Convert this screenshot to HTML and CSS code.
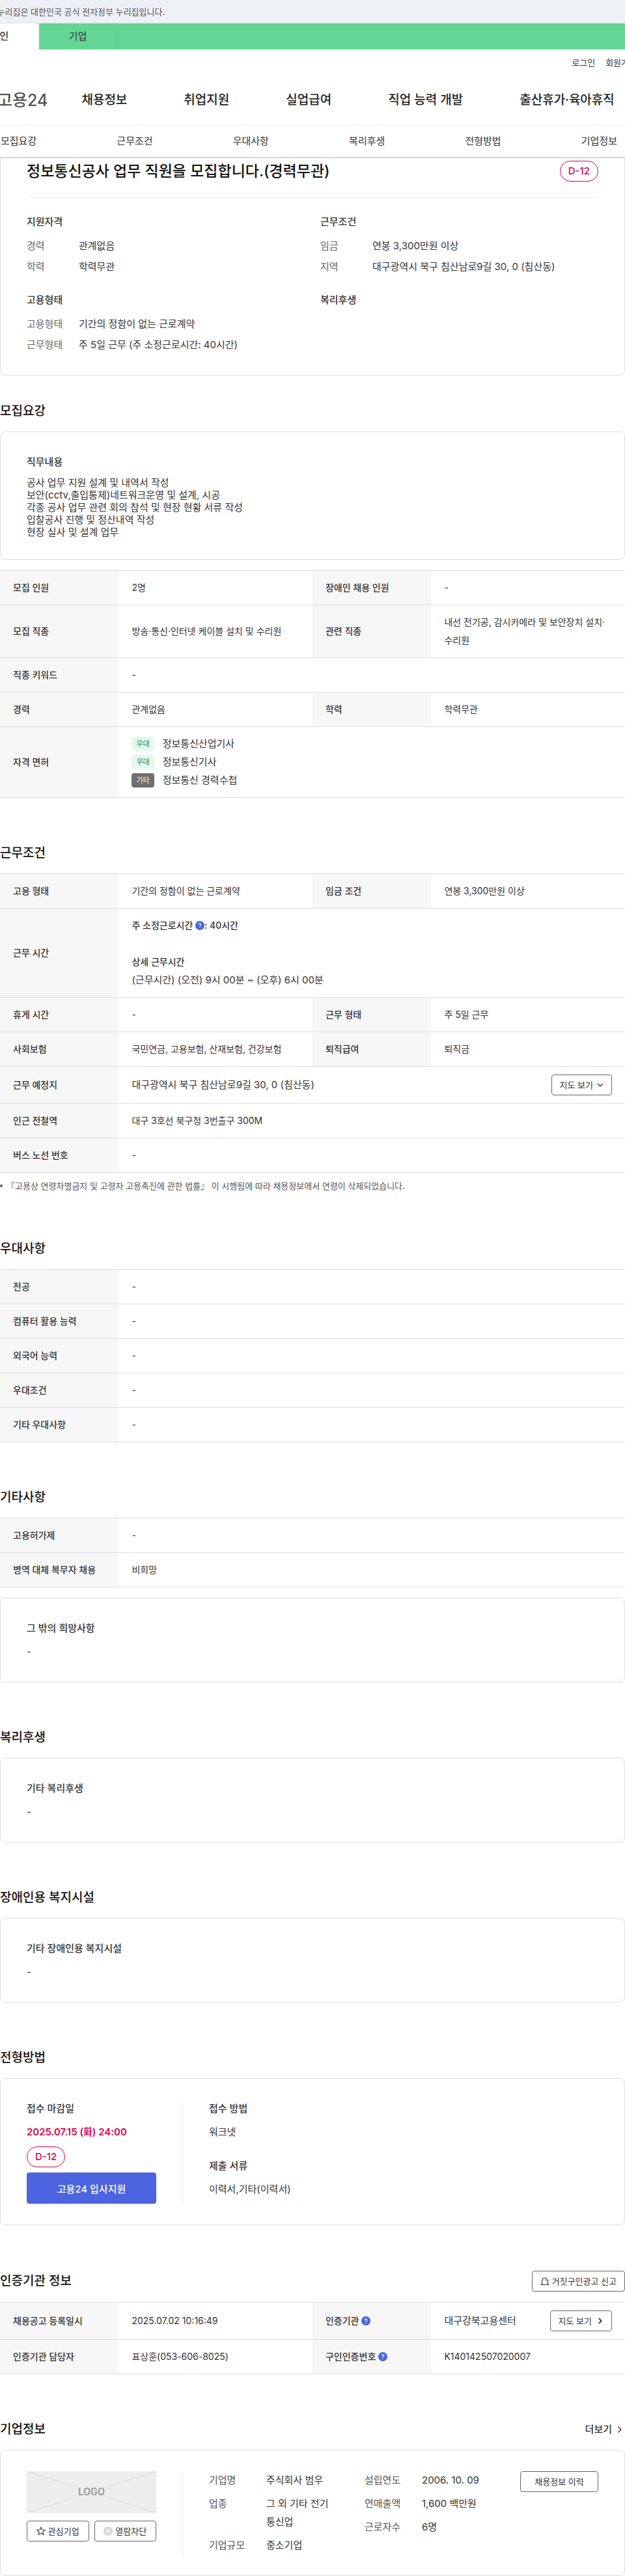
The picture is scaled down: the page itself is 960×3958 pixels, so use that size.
FILE: index.html
```html
<!DOCTYPE html>
<html lang="ko">
<head>
<meta charset="utf-8">
<meta name="viewport" content="width=device-width, initial-scale=1">
<title>고용24 채용정보 상세</title>
<link rel="stylesheet" href="styles.css">
</head>
<body>
<div class="gov-banner"><p class="gov-text">이 누리집은 대한민국 공식 전자정부 누리집입니다.</p></div>
<header class="site-header">
  <div class="member-bar">
    <a class="member-tab is-active" href="#">개인</a>
    <a class="member-tab" href="#">기업</a>
  </div>
  <div class="util">
    <a href="#">로그인</a>
    <a href="#">회원가입</a>
  </div>
  <nav class="main-nav" aria-label="주 메뉴">
    <a class="brand" href="#">고용24</a>
    <div class="main-links">
      <a href="#">채용정보</a>
      <a href="#">취업지원</a>
      <a href="#">실업급여</a>
      <a href="#">직업 능력 개발</a>
      <a href="#">출산휴가·육아휴직</a>
    </div>
  </nav>
  <nav class="page-tabs" aria-label="상세 메뉴">
    <a href="#recruit">모집요강</a>
    <a href="#work">근무조건</a>
    <a href="#prefer">우대사항</a>
    <a href="#welfare">복리후생</a>
    <a href="#method">전형방법</a>
    <a href="#company">기업정보</a>
  </nav>
</header>
<main>
  <section class="card summary">
    <div class="summary-head">
      <h1>정보통신공사 업무 직원을 모집합니다.(경력무관)</h1>
      <span class="dday">D-12</span>
    </div>
    <div class="summary-grid">
      <div>
        <h3>지원자격</h3>
        <dl class="pairs">
          <dt>경력</dt><dd>관계없음</dd>
          <dt>학력</dt><dd>학력무관</dd>
        </dl>
      </div>
      <div>
        <h3>근무조건</h3>
        <dl class="pairs">
          <dt>임금</dt><dd>연봉 3,300만원 이상</dd>
          <dt>지역</dt><dd>대구광역시 북구 침산남로9길 30, 0 (침산동)</dd>
        </dl>
      </div>
      <div>
        <h3>고용형태</h3>
        <dl class="pairs">
          <dt>고용형태</dt><dd>기간의 정함이 없는 근로계약</dd>
          <dt>근무형태</dt><dd>주 5일 근무 (주 소정근로시간: 40시간)</dd>
        </dl>
      </div>
      <div>
        <h3>복리후생</h3>
      </div>
    </div>
  </section>

  <section class="block block-first" id="recruit">
    <div class="block-head"><h2>모집요강</h2></div>
    <div class="card">
      <h3>직무내용</h3>
      <p class="duties">공사 업무 지원 설계 및 내역서 작성<br>보안(cctv,출입통제)네트워크운영 및 설계, 시공<br>각종 공사 업무 관련 회의 참석 및 현장 현황 서류 작성<br>입찰공사 진행 및 정산내역 작성<br>현장 실사 및 설계 업무</p>
    </div>
    <table class="info after-card">
      <colgroup><col class="c-th"><col class="c-td"><col class="c-th"><col class="c-td"></colgroup>
      <tr><th scope="row">모집 인원</th><td>2명</td><th scope="row">장애인 채용 인원</th><td>-</td></tr>
      <tr><th scope="row">모집 직종</th><td>방송·통신·인터넷 케이블 설치 및 수리원</td><th scope="row">관련 직종</th><td>내선 전기공, 감시카메라 및 보안장치 설치·수리원</td></tr>
      <tr><th scope="row">직종 키워드</th><td colspan="3">-</td></tr>
      <tr><th scope="row">경력</th><td>관계없음</td><th scope="row">학력</th><td>학력무관</td></tr>
      <tr><th scope="row">자격 면허</th><td colspan="3">
        <ul class="licenses">
          <li><span class="badge">우대</span>정보통신산업기사</li>
          <li><span class="badge">우대</span>정보통신기사</li>
          <li><span class="badge badge-dark">기타</span>정보통신 경력수첩</li>
        </ul>
      </td></tr>
    </table>
  </section>

  <section class="block" id="work">
    <div class="block-head"><h2>근무조건</h2></div>
    <table class="info">
      <colgroup><col class="c-th"><col class="c-td"><col class="c-th"><col class="c-td"></colgroup>
      <tr><th scope="row">고용 형태</th><td>기간의 정함이 없는 근로계약</td><th scope="row">임금 조건</th><td>연봉 3,300만원 이상</td></tr>
      <tr><th scope="row">근무 시간</th><td colspan="3">
        <p class="strong">주 소정근로시간 <button class="help" type="button" aria-label="도움말"><svg viewBox="0 0 14 14" width="14" height="14"><circle cx="7" cy="7" r="7" fill="#4c64e0"/><path d="M5.3 5.6a1.7 1.7 0 1 1 2.5 1.5c-.6.3-.8.6-.8 1.100M7 9.600v1.200" fill="none" stroke="#fff" stroke-width="1.200"/></svg></button>: 40시간</p>
        <p class="strong spaced">상세 근무시간</p>
        <p class="large">(근무시간) (오전) 9시 00분 ~ (오후) 6시 00분</p>
      </td></tr>
      <tr><th scope="row">휴게 시간</th><td>-</td><th scope="row">근무 형태</th><td>주 5일 근무</td></tr>
      <tr><th scope="row">사회보험</th><td>국민연금, 고용보험, 산재보험, 건강보험</td><th scope="row">퇴직급여</th><td>퇴직금</td></tr>
      <tr><th scope="row">근무 예정지</th><td colspan="3">
        <div class="with-button">
          <span class="large">대구광역시 북구 침산남로9길 30, 0 (침산동)</span>
          <button class="btn btn-map" type="button">지도 보기<svg viewBox="0 0 10 10" width="10" height="10"><path d="M1 3l4 4 4-4" fill="none" stroke="#333" stroke-width="1.300"/></svg></button>
        </div>
      </td></tr>
      <tr><th scope="row">인근 전철역</th><td colspan="3">대구 3호선 북구청 3번출구 300M</td></tr>
      <tr><th scope="row">버스 노선 번호</th><td colspan="3">-</td></tr>
    </table>
    <ul class="note"><li>『고용상 연령차별금지 및 고령자 고용촉진에 관한 법률』 이 시행됨에 따라 채용정보에서 연령이 삭제되었습니다.</li></ul>
  </section>

  <section class="block" id="prefer">
    <div class="block-head"><h2>우대사항</h2></div>
    <table class="info">
      <colgroup><col class="c-th"><col></colgroup>
      <tr><th scope="row">전공</th><td>-</td></tr>
      <tr><th scope="row">컴퓨터 활용 능력</th><td>-</td></tr>
      <tr><th scope="row">외국어 능력</th><td>-</td></tr>
      <tr><th scope="row">우대조건</th><td>-</td></tr>
      <tr><th scope="row">기타 우대사항</th><td>-</td></tr>
    </table>
  </section>

  <section class="block">
    <div class="block-head"><h2>기타사항</h2></div>
    <table class="info">
      <colgroup><col class="c-th"><col></colgroup>
      <tr><th scope="row">고용허가제</th><td>-</td></tr>
      <tr><th scope="row">병역 대체 복무자 채용</th><td>비희망</td></tr>
    </table>
    <div class="card after-table">
      <h3>그 밖의 희망사항</h3>
      <p>-</p>
    </div>
  </section>

  <section class="block" id="welfare">
    <div class="block-head"><h2>복리후생</h2></div>
    <div class="card">
      <h3>기타 복리후생</h3>
      <p>-</p>
    </div>
  </section>

  <section class="block">
    <div class="block-head"><h2>장애인용 복지시설</h2></div>
    <div class="card">
      <h3>기타 장애인용 복지시설</h3>
      <p>-</p>
    </div>
  </section>

  <section class="block" id="method">
    <div class="block-head"><h2>전형방법</h2></div>
    <div class="card split">
      <div class="split-side">
        <h3>접수 마감일</h3>
        <p class="deadline">2025.07.15 (화) 24:00</p>
        <span class="dday">D-12</span>
        <button class="btn-primary" type="button">고용24 입사지원</button>
      </div>
      <div class="split-main steps">
        <div><h3>접수 방법</h3><p>워크넷</p></div>
        <div><h3>제출 서류</h3><p>이력서,기타(이력서)</p></div>
      </div>
    </div>
  </section>

  <section class="block">
    <div class="block-head">
      <h2>인증기관 정보</h2>
      <button class="btn btn-icon" type="button"><svg viewBox="0 0 14 14" width="14" height="14"><path d="M2.500 12V6.500a4.500 4.500 0 0 1 9 0V12M.5 12.500h13M7.500 4.500q1.500.3 1.700 2" fill="none" stroke="#333" stroke-width="1.200"/></svg>거짓구인광고 신고</button>
    </div>
    <table class="info">
      <colgroup><col class="c-th"><col class="c-td"><col class="c-th"><col class="c-td"></colgroup>
      <tr><th scope="row">채용공고 등록일시</th><td>2025.07.02 10:16:49</td><th scope="row">인증기관 <button class="help" type="button" aria-label="도움말"><svg viewBox="0 0 14 14" width="14" height="14"><circle cx="7" cy="7" r="7" fill="#4c64e0"/><path d="M5.3 5.600a1.700 1.700 0 1 1 2.500 1.500c-.6.3-.8.6-.8 1.100M7 9.600v1.200" fill="none" stroke="#fff" stroke-width="1.200"/></svg></button></th><td>
        <div class="with-button">
          <span class="large">대구강북고용센터</span>
          <button class="btn btn-map" type="button">지도 보기<svg viewBox="0 0 12 10" width="12" height="10"><path d="M5 1l3.500 4L5 9" fill="none" stroke="#222" stroke-width="1.800"/></svg></button>
        </div>
      </td></tr>
      <tr><th scope="row">인증기관 담당자</th><td>표상훈(053-606-8025)</td><th scope="row">구인인증번호 <button class="help" type="button" aria-label="도움말"><svg viewBox="0 0 14 14" width="14" height="14"><circle cx="7" cy="7" r="7" fill="#4c64e0"/><path d="M5.3 5.600a1.700 1.700 0 1 1 2.500 1.500c-.6.3-.8.6-.8 1.100M7 9.600v1.200" fill="none" stroke="#fff" stroke-width="1.200"/></svg></button></th><td>K140142507020007</td></tr>
    </table>
  </section>

  <section class="block" id="company">
    <div class="block-head">
      <h2>기업정보</h2>
      <a class="more" href="#">더보기<svg viewBox="0 0 8 12" width="8" height="12"><path d="M1.500 1.500L6 6l-4.500 4.500" fill="none" stroke="#333" stroke-width="1.400"/></svg></a>
    </div>
    <div class="card split">
      <div class="split-side">
        <div class="logo-box">
          <svg class="logo-lines" viewBox="0 0 199 64" preserveAspectRatio="none" aria-hidden="true"><path d="M0 0l72 23M199 0l-72 23M0 64l72-23M199 64l-72-23" fill="none" stroke="#ddd" stroke-width="1.200"/></svg>
          <span class="logo-text">LOGO</span>
        </div>
        <div class="company-actions">
          <button class="btn btn-icon" type="button"><svg viewBox="0 0 14 14" width="14" height="14"><path d="M7 1l1.800 4 4.400.4-3.300 2.900 1 4.300L7 10.300l-3.900 2.300 1-4.300L.8 5.400 5.200 5z" fill="none" stroke="#444" stroke-width="1.200" stroke-linejoin="round"/></svg>관심기업</button>
          <button class="btn btn-icon" type="button"><svg viewBox="0 0 14 14" width="14" height="14"><circle cx="7" cy="7" r="7" fill="#d8d8d8"/><path d="M4.300 4.300l5.400 5.400M9.700 4.300L4.300 9.700" stroke="#fff" stroke-width="1.300"/></svg>열람차단</button>
        </div>
      </div>
      <div class="split-main company">
        <dl class="facts">
          <dt>기업명</dt><dd>주식회사 범우</dd>
          <dt>업종</dt><dd>그 외 기타 전기 통신업</dd>
          <dt>기업규모</dt><dd>중소기업</dd>
        </dl>
        <dl class="facts facts-wide">
          <dt>설립연도</dt><dd>2006. 10. 09</dd>
          <dt>연매출액</dt><dd>1,600 백만원</dd>
          <dt>근로자수</dt><dd>6명</dd>
        </dl>
        <button class="btn btn-history" type="button">채용정보 이력</button>
      </div>
    </div>
  </section>
</main>
</body>
</html>
```
FILE: styles.css
```css
* { box-sizing: border-box; }

body {
  margin: 0;
  overflow-x: hidden;
  background: #fff;
  color: #333;
  font-family: Inter, "Noto Sans CJK KR", sans-serif;
  font-size: 15px;
  line-height: 28px;
}

h1, h2, h3, p, dl, dd, ul { margin: 0; padding: 0; }
ul { list-style: none; }
a { color: inherit; text-decoration: none; white-space: nowrap; }
svg { display: block; flex: none; }
button { font-family: inherit; color: inherit; margin: 0; cursor: pointer; }

/* Header */
.gov-banner { height: 36px; background: #edf0f5; overflow: hidden; }
.gov-text {
  margin-left: -20px;
  font-size: 13px;
  line-height: 36px;
  color: #555;
  white-space: nowrap;
}

.site-header {
  position: relative;
  overflow-x: clip;
  background: #fff;
  box-shadow: 0 1px 3px rgba(0, 0, 0, 0.3);
}
.member-bar { display: flex; height: 40px; padding-right: 60px; margin-left: -60px; margin-right: -60px; background: #63d696; }
.member-tab {
  width: 120px;
  line-height: 40px;
  text-align: center;
  border-right: 1px solid #57c688;
}
.member-tab.is-active { background: #fff; font-weight: 500; border-right-color: #fff; }

.util {
  display: flex;
  justify-content: flex-end;
  gap: 16px;
  padding-top: 8px;
  margin-right: -18px;
  font-size: 13px;
  line-height: 24px;
}
.main-nav {
  display: flex;
  align-items: center;
  gap: 52px;
  height: 85px;
  padding-top: 8px;
  border-bottom: 1px solid #eee;
}
.brand { margin-left: -4px; font-size: 25px; font-weight: 500; color: #555; }
.main-links { display: flex; gap: 87px; font-size: 19px; font-weight: 500; color: #222; }
.page-tabs { display: flex; justify-content: space-between; padding: 0 12px 0 1px; line-height: 48px; }

/* Cards and section blocks */
.card { padding: 32px 40px; border: 1px solid #ddd; border-radius: 8px; }
.card h3 { margin-bottom: 8px; }
h3 { font-size: 15px; font-weight: 500; }
h2 { font-size: 19px; font-weight: 500; line-height: 30px; color: #111; }

.summary { border-top: 0; border-radius: 0 0 8px 8px; padding-top: 6px; padding-bottom: 34px; }
.summary-head {
  display: flex;
  justify-content: space-between;
  align-items: center;
  padding-bottom: 24px;
  border-bottom: 1px solid #eee;
}
.summary-head h1 { font-size: 23px; font-weight: 500; line-height: 32px; color: #111; }
.summary-grid {
  display: grid;
  grid-template-columns: 1fr 1fr;
  column-gap: 24px;
  row-gap: 26px;
  padding-top: 24px;
  line-height: 24px;
}
.summary-grid h3 { margin-bottom: 12px; line-height: 26px; }
.pairs { display: grid; grid-template-columns: 80px 1fr; row-gap: 8px; }
.pairs dt { color: #666; }

.dday {
  display: inline-block;
  padding: 0 12px;
  border: 1px solid #e0004d;
  border-radius: 16px;
  color: #e0004d;
  font-weight: 500;
  line-height: 30px;
}

.block { margin-top: 70px; }
.block-first { margin-top: 40px; }
.block-head { display: flex; justify-content: space-between; align-items: center; margin-bottom: 16px; }
.duties { line-height: 19px; }
.after-card, .after-table { margin-top: 16px; }

/* Tables */
.info {
  width: 100%;
  table-layout: fixed;
  border-collapse: separate;
  border-spacing: 0;
  border-top: 1px solid #ddd;
  font-size: 14px;
}
.c-th { width: 19%; }
.c-td { width: 31%; }
.info th, .info td { padding: 12px 20px; border-bottom: 1px solid #ddd; text-align: left; }
.info th { background: #f7f7f7; font-weight: 500; white-space: nowrap; }
.large { font-size: 15px; }
.strong { font-weight: 500; }
.spaced { margin-top: 28px; }
.licenses li { display: flex; align-items: center; gap: 13px; font-size: 15px; }
.badge {
  padding: 0 7px;
  border-radius: 4px;
  background: #e6f8ee;
  color: #128a48;
  font-size: 11px;
  line-height: 22px;
}
.badge-dark { background: #6f6f6f; color: #fff; }
.with-button { display: flex; justify-content: space-between; align-items: center; }
.help { display: inline-block; padding: 0; border: 0; background: none; vertical-align: -2px; line-height: 14px; }
.note { margin-top: 8px; font-size: 13px; line-height: 24px; color: #555; }
.note li { display: flex; align-items: center; gap: 6px; }
.note li::before { content: ""; width: 4px; height: 4px; border-radius: 50%; background: #555; }

/* Buttons */
.btn {
  display: flex;
  align-items: center;
  justify-content: center;
  gap: 4px;
  height: 32px;
  padding: 0 12px;
  border: 1px solid #666;
  border-radius: 4px;
  background: #fff;
  font-size: 13px;
  line-height: 20px;
  white-space: nowrap;
}
.btn-map { gap: 6px; }
.btn-primary {
  display: block;
  width: 100%;
  height: 48px;
  border: 0;
  border-radius: 4px;
  background: #4c64e0;
  color: #fff;
  font-size: 15px;
  font-weight: 500;
}
.more { display: flex; align-items: center; gap: 8px; padding-right: 4px; font-weight: 500; }

/* Two-part cards */
.split { display: flex; }
.split-side { flex: 0 0 240px; padding-right: 40px; border-right: 1px solid #eee; }
.split-main { flex: 1; padding-left: 40px; }
.deadline { font-weight: 600; color: #e0004d; }
.split-side .dday { display: block; width: fit-content; margin: 8px 0; }
.steps { display: grid; gap: 24px; align-content: start; }

.logo-box {
  display: grid;
  place-items: center;
  height: 64px;
  background: #ededed;
}
.logo-box > * { grid-area: 1 / 1; }
.logo-lines { width: 100%; height: 64px; }
.logo-text { font-family: Roboto, sans-serif; font-size: 16px; font-weight: 500; color: #999; }
.company-actions { display: flex; gap: 8px; margin-top: 12px; }
.company-actions .btn { flex: 1; padding: 0; }

.company { display: flex; align-items: flex-start; }
.facts { display: grid; grid-template-columns: 88px 112px; row-gap: 8px; margin-right: 39px; align-content: start; }
.facts-wide { margin-right: 0; }
.facts dt { color: #555; }
.btn-history { width: 120px; margin-left: auto; }
```
